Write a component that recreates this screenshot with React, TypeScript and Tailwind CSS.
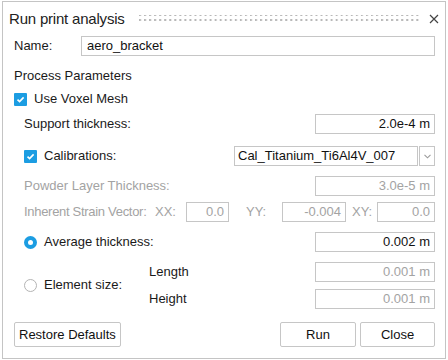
import React from 'react';

const font = { fontFamily: '"Liberation Sans", Arial, sans-serif' };

function Check() {
  return (
    <span className="w-[13px] h-[13px] bg-[#1c9de2] rounded-[1px] flex items-center justify-center shrink-0">
      <svg width="9" height="9" viewBox="0 0 9 9">
        <path d="M1.5 4.6 L3.6 6.6 L7.6 2.4" fill="none" stroke="white" strokeWidth="1.6" />
      </svg>
    </span>
  );
}

function Radio({ on }: { on?: boolean }) {
  return on ? (
    <span className="w-[13px] h-[13px] rounded-full bg-[#1c9de2] flex items-center justify-center shrink-0">
      <span className="w-[5px] h-[5px] rounded-full bg-white" />
    </span>
  ) : (
    <span className="w-[13px] h-[13px] rounded-full border border-[#b4b4b4] bg-white shrink-0" />
  );
}

function Field({ value, w, dim, left }: { value: string; w: string; dim?: boolean; left?: boolean }) {
  return (
    <div
      className={`${w} h-[20px] border border-[#c6c6c6] bg-white flex items-center ${
        left ? 'justify-start pl-[5px]' : 'justify-end pr-[4px]'
      } ${dim ? 'text-[#a3a3a3]' : 'text-[#111]'}`}
    >
      {value}
    </div>
  );
}

export default function App() {
  return (
    <div className="w-[448px] h-[360px] bg-white pl-[2px] pt-[1px] pr-[2px] pb-[1px]" style={font}>
      <div className="h-full border border-[#c4c4c4] bg-white text-[13px] text-[#1a1a1a] pl-[11px] pr-[10px] flex flex-col">
        {/* title */}
        <div className="h-[34px] flex items-center -ml-[5px] -mr-[4px]">
          <span className="text-[15px] text-[#222] mr-[14px] tracking-[-0.2px]">Run print analysis</span>
          <svg className="flex-1" height="10" viewBox="0 0 280 10" preserveAspectRatio="none">
            <defs>
              <pattern id="grip" width="5" height="5" patternUnits="userSpaceOnUse">
                <rect x="0" y="0" width="2" height="2" fill="#b8b8b8" />
              </pattern>
            </defs>
            <rect x="0" y="1" width="280" height="7" fill="url(#grip)" />
          </svg>
          <svg className="ml-[8px]" width="10" height="10" viewBox="0 0 10 10">
            <path d="M1 1 L9 9 M9 1 L1 9" stroke="#444" strokeWidth="1.2" />
          </svg>
        </div>

        {/* name */}
        <div className="h-[20px] flex items-center">
          <span className="w-[67px]">Name:</span>
          <Field value="aero_bracket" w="flex-1" left />
        </div>

        <div className="h-[20px] mt-[10px] flex items-center">Process Parameters</div>

        <div className="h-[20px] mt-[3px] flex items-center gap-[7px]">
          <Check />
          <span>Use Voxel Mesh</span>
        </div>

        <div className="pl-[10px] flex flex-col">
          <div className="h-[20px] mt-[5px] flex items-center justify-between">
            <span>Support thickness:</span>
            <Field value="2.0e-4 m" w="w-[120px]" />
          </div>

          <div className="h-[20px] mt-[12px] flex items-center">
            <Check />
            <span className="ml-[7px] flex-1">Calibrations:</span>
            <div className="w-[184px] h-[20px] border border-[#c6c6c6] flex items-center pl-[3px] text-[#111]">
              Cal_Titanium_Ti6Al4V_007
            </div>
            <div className="ml-[1px] w-[16px] h-[20px] border border-[#c6c6c6] flex items-center justify-center">
              <svg width="7" height="5" viewBox="0 0 7 5">
                <path d="M0.5 0.8 L3.5 3.8 L6.5 0.8" fill="none" stroke="#9a9a9a" strokeWidth="1.1" />
              </svg>
            </div>
          </div>

          <div className="h-[20px] mt-[10px] flex items-center justify-between text-[#a3a3a3]">
            <span>Powder Layer Thickness:</span>
            <Field value="3.0e-5 m" w="w-[120px]" dim />
          </div>

          <div className="h-[19px] mt-[6px] flex items-center text-[#a3a3a3]">
            <span className="w-[131px] tracking-[-0.3px]">Inherent Strain Vector:</span>
            <span className="w-[31px]">XX:</span>
            <Field value="0.0" w="w-[43px]" dim />
            <span className="ml-[17px] w-[36px]">YY:</span>
            <Field value="-0.004" w="w-[64px]" dim />
            <span className="ml-[6px] w-[25px]">XY:</span>
            <Field value="0.0" w="flex-1" dim />
          </div>

          <div className="h-[20px] mt-[11px] flex items-center">
            <Radio on />
            <span className="ml-[7px] flex-1">Average thickness:</span>
            <Field value="0.002 m" w="w-[120px]" />
          </div>

          <div className="mt-[10px] flex items-center">
            <Radio />
            <span className="ml-[7px] w-[105px]">Element size:</span>
            <div className="flex-1 flex flex-col gap-[8px]">
              <div className="h-[19px] flex items-center justify-between">
                <span>Length</span>
                <Field value="0.001 m" w="w-[120px]" dim />
              </div>
              <div className="h-[19px] flex items-center justify-between">
                <span>Height</span>
                <Field value="0.001 m" w="w-[120px]" dim />
              </div>
            </div>
          </div>
        </div>

        <div className="mt-[14px] flex items-center">
          <button className="h-[25px] px-[4px] border border-[#c6c6c6] rounded-[2px] bg-white text-[#111]">
            Restore Defaults
          </button>
          <div className="flex-1" />
          <button className="h-[25px] w-[76px] border border-[#c6c6c6] rounded-[2px] bg-white text-[#111]">Run</button>
          <button className="ml-[4px] h-[25px] w-[75px] border border-[#c6c6c6] rounded-[2px] bg-white text-[#111]">
            Close
          </button>
        </div>
      </div>
    </div>
  );
}
